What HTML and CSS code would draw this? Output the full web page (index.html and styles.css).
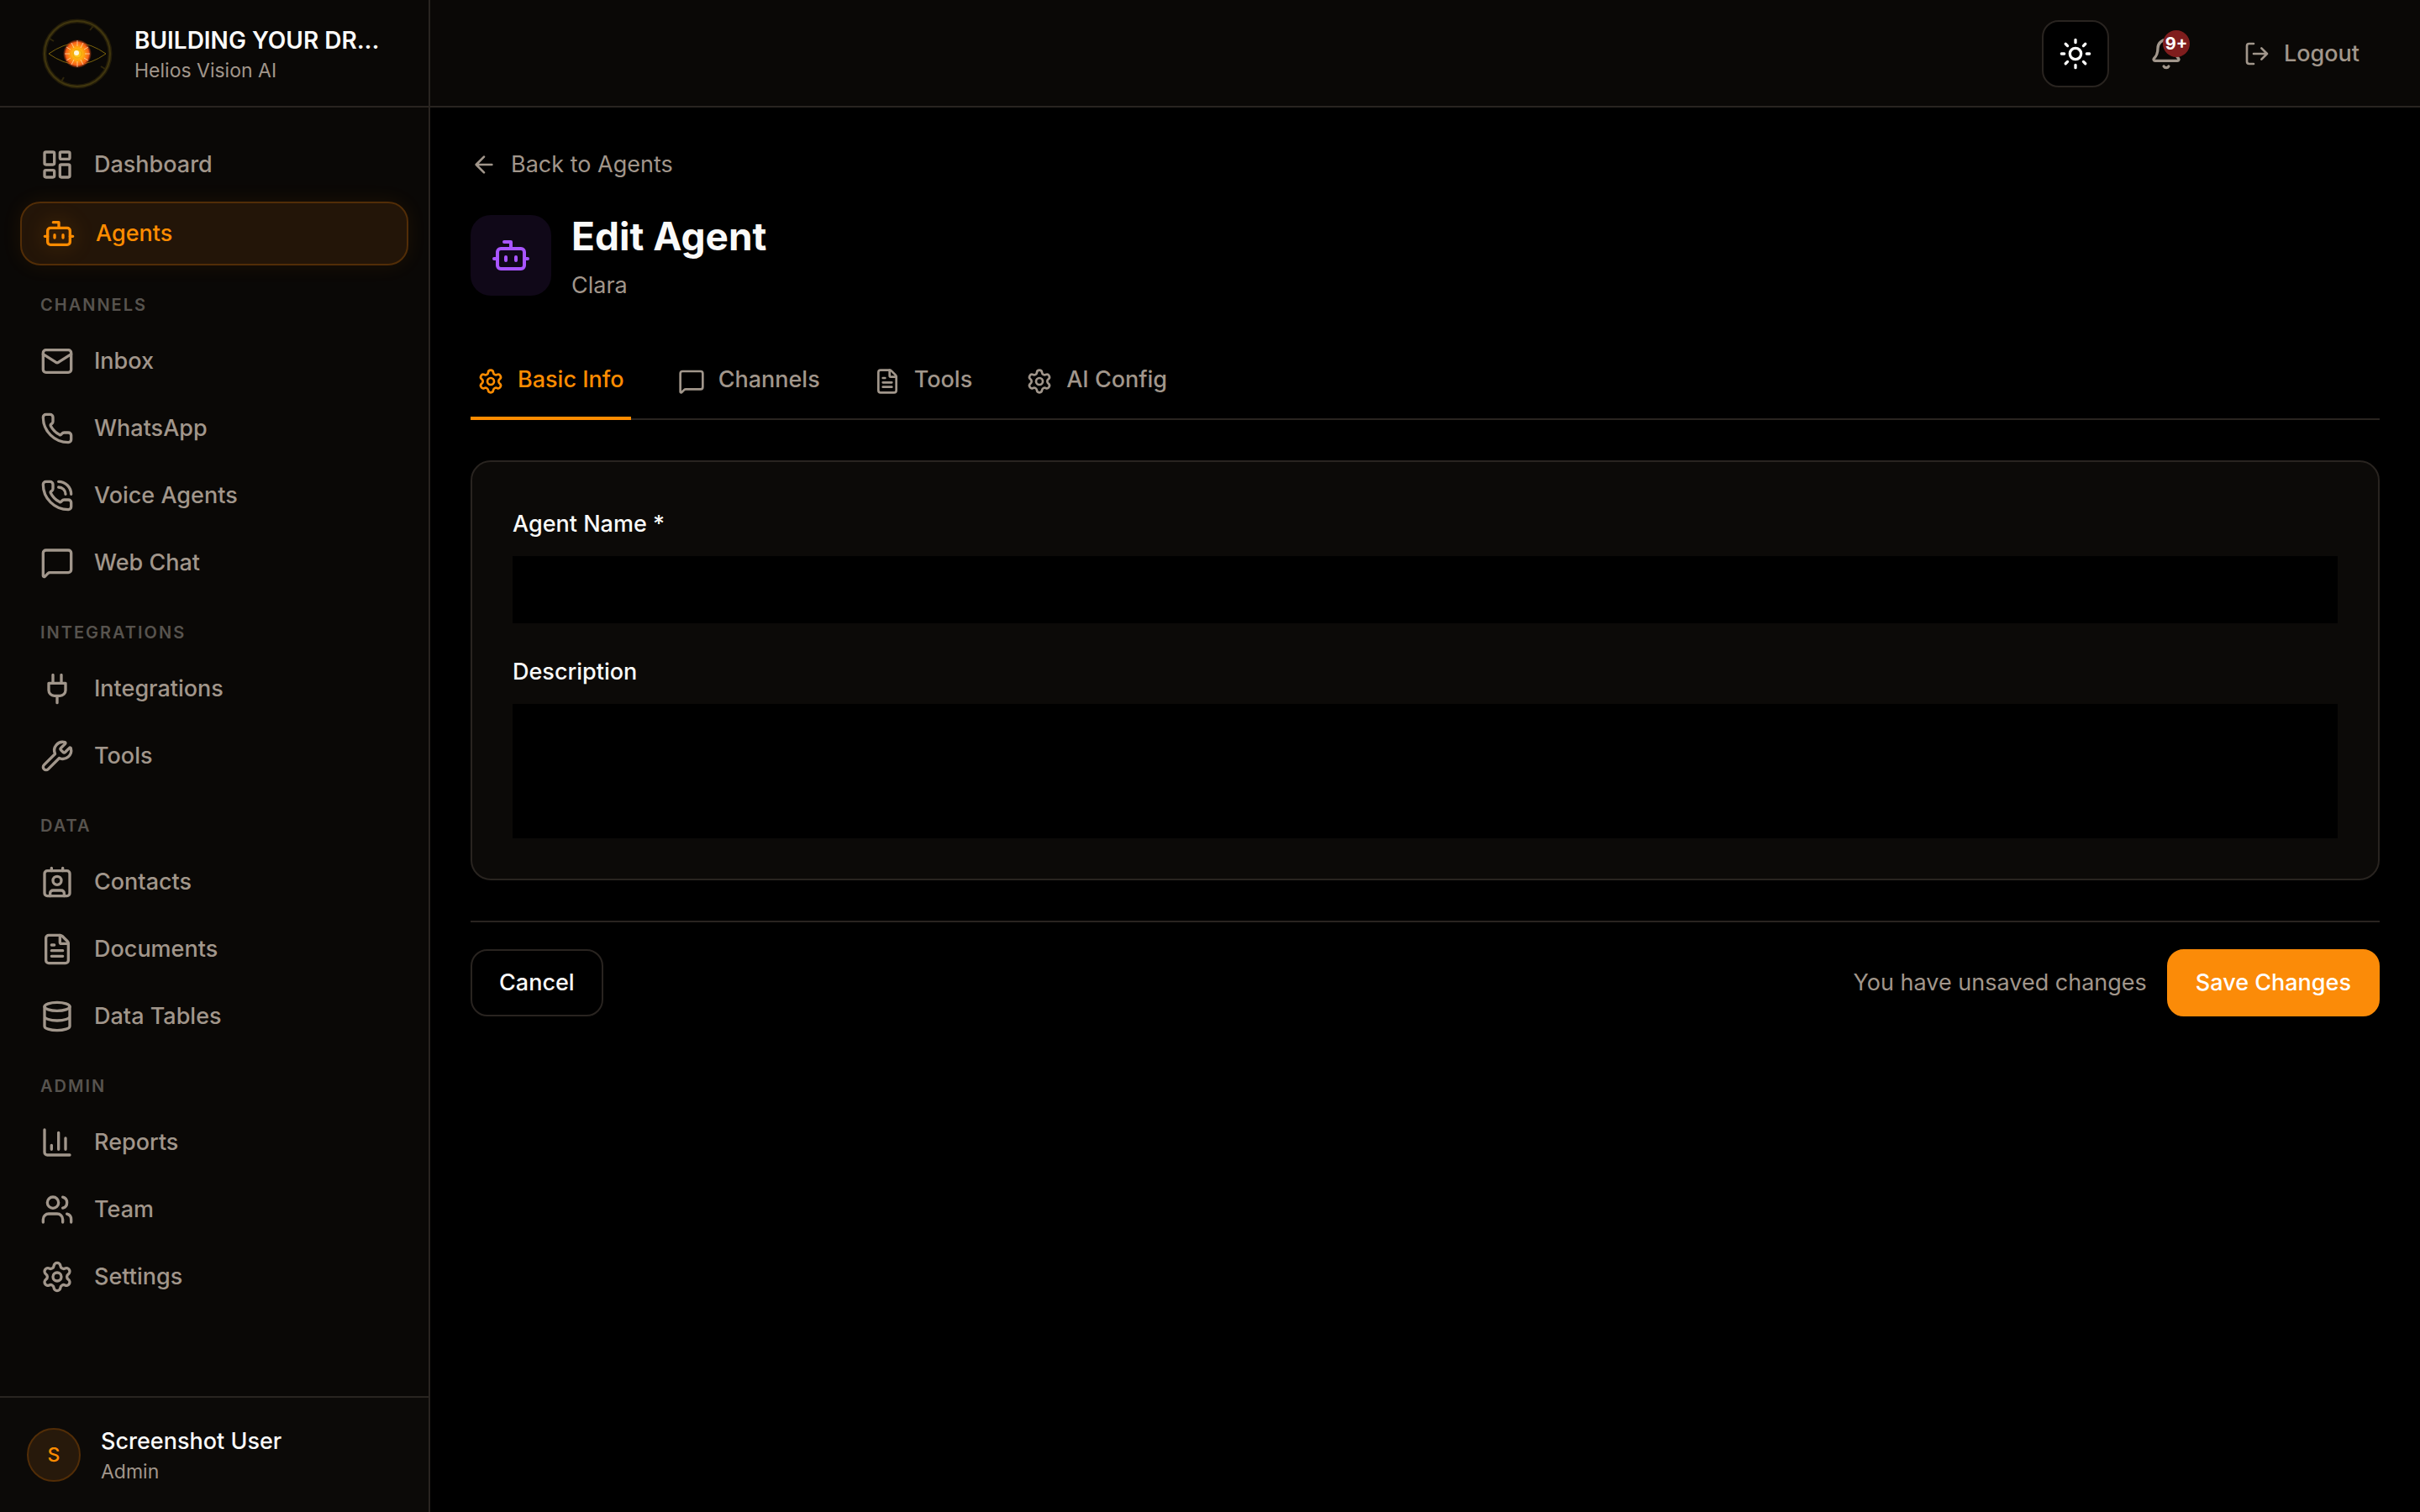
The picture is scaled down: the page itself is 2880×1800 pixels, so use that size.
FILE: index.html
```html
<!DOCTYPE html>
<html lang="en">
<head>
<meta charset="utf-8">
<title>Edit Agent</title>
<link rel="stylesheet" href="styles.css">
</head>
<body>
<svg class="sprite" aria-hidden="true">
  <symbol id="i-dashboard" viewBox="0 0 24 24"><rect width="7" height="9" x="3" y="3" rx="1"/><rect width="7" height="5" x="14" y="3" rx="1"/><rect width="7" height="9" x="14" y="12" rx="1"/><rect width="7" height="5" x="3" y="16" rx="1"/></symbol>
  <symbol id="i-bot" viewBox="0 0 24 24"><path d="M12 8V4H8"/><rect width="16" height="12" x="4" y="8" rx="2"/><path d="M2 14h2M20 14h2M15 13v2M9 13v2"/></symbol>
  <symbol id="i-mail" viewBox="0 0 24 24"><rect width="20" height="16" x="2" y="4" rx="2"/><path d="m22 7-8.991 5.727a2 2 0 0 1-2.009 0L2 7"/></symbol>
  <symbol id="i-phone" viewBox="0 0 24 24"><path d="M13.832 16.568a1 1 0 0 0 1.213-.303l.355-.465A2 2 0 0 1 17 15h3a2 2 0 0 1 2 2v3a2 2 0 0 1-2 2A18 18 0 0 1 2 4a2 2 0 0 1 2-2h3a2 2 0 0 1 2 2v3a2 2 0 0 1-.8 1.6l-.468.351a1 1 0 0 0-.292 1.233 14 14 0 0 0 6.392 6.384"/></symbol>
  <symbol id="i-phone-call" viewBox="0 0 24 24"><path d="M13 2a9 9 0 0 1 9 9M13 6a5 5 0 0 1 5 5"/><path d="M13.832 16.568a1 1 0 0 0 1.213-.303l.355-.465A2 2 0 0 1 17 15h3a2 2 0 0 1 2 2v3a2 2 0 0 1-2 2A18 18 0 0 1 2 4a2 2 0 0 1 2-2h3a2 2 0 0 1 2 2v3a2 2 0 0 1-.8 1.6l-.468.351a1 1 0 0 0-.292 1.233 14 14 0 0 0 6.392 6.384"/></symbol>
  <symbol id="i-chat" viewBox="0 0 24 24"><path d="M22 17a2 2 0 0 1-2 2H6.828a2 2 0 0 0-1.414.586l-2.202 2.202A.71.71 0 0 1 2 21.286V5a2 2 0 0 1 2-2h16a2 2 0 0 1 2 2z"/></symbol>
  <symbol id="i-plug" viewBox="0 0 24 24"><path d="M12 22v-5M9 8V2M15 8V2M18 8v5a4 4 0 0 1-4 4h-4a4 4 0 0 1-4-4V8Z"/></symbol>
  <symbol id="i-wrench" viewBox="0 0 24 24"><path d="M14.7 6.3a1 1 0 0 0 0 1.4l1.6 1.6a1 1 0 0 0 1.4 0l3.106-3.105c.32-.322.863-.22.983.218a6 6 0 0 1-8.259 7.057l-7.91 7.91a1 1 0 0 1-2.999-3l7.91-7.91a6 6 0 0 1 7.057-8.259c.438.12.54.662.219.984z"/></symbol>
  <symbol id="i-contact" viewBox="0 0 24 24"><path d="M16 2v2M8 2v2M7 22v-2a2 2 0 0 1 2-2h6a2 2 0 0 1 2 2v2"/><circle cx="12" cy="11" r="3"/><rect x="3" y="4" width="18" height="18" rx="2"/></symbol>
  <symbol id="i-file" viewBox="0 0 24 24"><path d="M6 22a2 2 0 0 1-2-2V4a2 2 0 0 1 2-2h8a2.4 2.4 0 0 1 1.704.706l3.588 3.588A2.4 2.4 0 0 1 20 8v12a2 2 0 0 1-2 2z"/><path d="M14 2v5a1 1 0 0 0 1 1h5M10 9H8M16 13H8M16 17H8"/></symbol>
  <symbol id="i-database" viewBox="0 0 24 24"><ellipse cx="12" cy="5" rx="9" ry="3"/><path d="M3 5V19A9 3 0 0 0 21 19V5M3 12A9 3 0 0 0 21 12"/></symbol>
  <symbol id="i-chart" viewBox="0 0 24 24"><path d="M3 3v16a2 2 0 0 0 2 2h16M18 17V9M13 17V5M8 17v-3"/></symbol>
  <symbol id="i-users" viewBox="0 0 24 24"><path d="M16 21v-2a4 4 0 0 0-4-4H6a4 4 0 0 0-4 4v2M16 3.128a4 4 0 0 1 0 7.744M22 21v-2a4 4 0 0 0-3-3.87"/><circle cx="9" cy="7" r="4"/></symbol>
  <symbol id="i-gear" viewBox="0 0 24 24"><path d="M9.671 4.136a2.34 2.34 0 0 1 4.659 0 2.34 2.34 0 0 0 3.319 1.915 2.34 2.34 0 0 1 2.33 4.033 2.34 2.34 0 0 0 0 3.831 2.34 2.34 0 0 1-2.33 4.033 2.34 2.34 0 0 0-3.319 1.915 2.34 2.34 0 0 1-4.659 0 2.34 2.34 0 0 0-3.32-1.915 2.34 2.34 0 0 1-2.33-4.033 2.34 2.34 0 0 0 0-3.831A2.34 2.34 0 0 1 6.35 6.051a2.34 2.34 0 0 0 3.319-1.915"/><circle cx="12" cy="12" r="3"/></symbol>
  <symbol id="i-sun" viewBox="0 0 24 24"><circle cx="12" cy="12" r="4"/><path d="M12 2v2M12 20v2M4.93 4.93l1.41 1.41M17.66 17.66l1.41 1.41M2 12h2M20 12h2M6.34 17.66l-1.41 1.41M19.07 4.93l-1.41 1.41"/></symbol>
  <symbol id="i-bell" viewBox="0 0 24 24"><path d="M10.268 21a2 2 0 0 0 3.464 0M3.262 15.326A1 1 0 0 0 4 17h16a1 1 0 0 0 .74-1.673C19.41 13.956 18 12.499 18 8A6 6 0 0 0 6 8c0 4.499-1.411 5.956-2.738 7.326"/></symbol>
  <symbol id="i-logout" viewBox="0 0 24 24"><path d="m16 17 5-5-5-5M21 12H9M9 21H5a2 2 0 0 1-2-2V5a2 2 0 0 1 2-2h4"/></symbol>
  <symbol id="i-back" viewBox="0 0 24 24"><path d="m12 19-7-7 7-7M19 12H5"/></symbol>
</svg>

<div class="app">
  <aside class="sidebar">
    <div class="brand">
      <svg class="brand-logo" viewBox="0 0 88 88" aria-hidden="true">
        <defs>
          <radialGradient id="sun-glow">
            <stop offset="0" stop-color="#ffd21a"/>
            <stop offset=".45" stop-color="#ffa60f"/>
            <stop offset=".8" stop-color="#f8601a"/>
            <stop offset="1" stop-color="#d8400f" stop-opacity="0"/>
          </radialGradient>
        </defs>
        <circle cx="44" cy="44" r="39" fill="none" stroke="#231c09" stroke-width="5"/>
        <circle cx="44" cy="44" r="39" fill="none" stroke="#40360e" stroke-width="2"/>
        <path d="M63 11l-4 5M11 26l5 3M77 62l-5-3M25 77l3-5" stroke="#2e260b" stroke-width="2"/>
        <path d="M10 44Q27 32 44 31Q61 32 78 44Q61 56 44 57Q27 56 10 44Z" fill="none" stroke="#7a620c" stroke-width="1"/>
        <circle cx="44" cy="44" r="17" fill="url(#sun-glow)"/>
        <path d="M44 28v7M44 53v7M29 44h6M53 44h6M37 31l3 6M51 31l-3 6M37 57l3-6M51 57l-3-6M31 36l5 3M57 36l-5 3M31 52l5-3M57 52l-5-3" stroke="#ffe0b0" stroke-opacity=".75" stroke-width="1"/>
        <circle cx="44" cy="44" r="5" fill="#ffc41c" stroke="#e8a60c" stroke-width="1"/>
        <circle cx="43" cy="43" r="3" fill="#fff6d8"/>
      </svg>
      <div class="brand-text">
        <div class="brand-name">BUILDING YOUR DR...</div>
        <div class="small">Helios Vision AI</div>
      </div>
    </div>
    <nav class="nav">
      <div class="nav-group">
        <a class="nav-item" href="#"><svg class="icon"><use href="#i-dashboard"/></svg>Dashboard</a>
        <a class="nav-item active" href="#" aria-current="page"><svg class="icon"><use href="#i-bot"/></svg>Agents</a>
      </div>
      <div class="nav-section">
        <h2 class="nav-label">CHANNELS</h2>
        <div class="nav-group">
          <a class="nav-item" href="#"><svg class="icon"><use href="#i-mail"/></svg>Inbox</a>
          <a class="nav-item" href="#"><svg class="icon"><use href="#i-phone"/></svg>WhatsApp</a>
          <a class="nav-item" href="#"><svg class="icon"><use href="#i-phone-call"/></svg>Voice Agents</a>
          <a class="nav-item" href="#"><svg class="icon"><use href="#i-chat"/></svg>Web Chat</a>
        </div>
      </div>
      <div class="nav-section">
        <h2 class="nav-label">INTEGRATIONS</h2>
        <div class="nav-group">
          <a class="nav-item" href="#"><svg class="icon"><use href="#i-plug"/></svg>Integrations</a>
          <a class="nav-item" href="#"><svg class="icon"><use href="#i-wrench"/></svg>Tools</a>
        </div>
      </div>
      <div class="nav-section">
        <h2 class="nav-label">DATA</h2>
        <div class="nav-group">
          <a class="nav-item" href="#"><svg class="icon"><use href="#i-contact"/></svg>Contacts</a>
          <a class="nav-item" href="#"><svg class="icon"><use href="#i-file"/></svg>Documents</a>
          <a class="nav-item" href="#"><svg class="icon"><use href="#i-database"/></svg>Data Tables</a>
        </div>
      </div>
      <div class="nav-section">
        <h2 class="nav-label">ADMIN</h2>
        <div class="nav-group">
          <a class="nav-item" href="#"><svg class="icon"><use href="#i-chart"/></svg>Reports</a>
          <a class="nav-item" href="#"><svg class="icon"><use href="#i-users"/></svg>Team</a>
          <a class="nav-item" href="#"><svg class="icon"><use href="#i-gear"/></svg>Settings</a>
        </div>
      </div>
    </nav>
    <div class="user">
      <div class="avatar">S</div>
      <div>
        <div class="user-name">Screenshot User</div>
        <div class="small">Admin</div>
      </div>
    </div>
  </aside>

  <div class="content">
    <header class="topbar">
      <button class="theme-button" type="button" aria-label="Toggle theme"><svg class="icon"><use href="#i-sun"/></svg></button>
      <button class="bell-button" type="button" aria-label="Notifications"><svg class="icon"><use href="#i-bell"/></svg><span class="badge">9+</span></button>
      <button class="logout-button" type="button"><svg class="icon icon-sm"><use href="#i-logout"/></svg>Logout</button>
    </header>
    <main class="main">
      <a class="back" href="#"><svg class="icon icon-sm"><use href="#i-back"/></svg>Back to Agents</a>
      <div class="page-head">
        <div class="page-icon"><svg class="icon icon-lg"><use href="#i-bot"/></svg></div>
        <div class="page-titles">
          <h1 class="page-title">Edit Agent</h1>
          <p class="page-subtitle">Clara</p>
        </div>
      </div>
      <div class="tabs" role="tablist">
        <button class="tab selected" type="button" role="tab" aria-selected="true"><svg class="icon icon-sm"><use href="#i-gear"/></svg>Basic Info</button>
        <button class="tab" type="button" role="tab"><svg class="icon icon-sm"><use href="#i-chat"/></svg>Channels</button>
        <button class="tab" type="button" role="tab"><svg class="icon icon-sm"><use href="#i-file"/></svg>Tools</button>
        <button class="tab" type="button" role="tab"><svg class="icon icon-sm"><use href="#i-gear"/></svg>AI Config</button>
      </div>
      <form class="form">
        <div class="card">
          <div class="field">
            <label class="field-label" for="agent-name">Agent Name *</label>
            <input class="control" id="agent-name" type="text">
          </div>
          <div class="field">
            <label class="field-label" for="agent-description">Description</label>
            <textarea class="control control-area" id="agent-description"></textarea>
          </div>
        </div>
        <div class="actions">
          <button class="button" type="button">Cancel</button>
          <div class="actions-end">
            <span class="hint">You have unsaved changes</span>
            <button class="button primary" type="submit">Save Changes</button>
          </div>
        </div>
      </form>
    </main>
  </div>
</div>
</body>
</html>
```
FILE: styles.css
```css
:root {
  --bg: #000;
  --surface: #0a0806;
  --surface-raised: #0c0a08;
  --border: #292420;
  --text: #fafaf9;
  --muted: #a1968b;
  --faint: #57534e;
  --accent: #ff8c00;
}

* { box-sizing: border-box; }

body {
  margin: 0;
  background: var(--bg);
  color: var(--text);
  font-family: Inter, "Liberation Sans", sans-serif;
  font-size: 27px;
  line-height: 40px;
}

h1, h2, p { margin: 0; }
a { color: inherit; text-decoration: none; }

button {
  margin: 0;
  padding: 0;
  border: 0;
  background: none;
  color: inherit;
  font: inherit;
  cursor: pointer;
}

.sprite { display: none; }

.icon {
  flex: none;
  width: 40px;
  height: 40px;
  fill: none;
  stroke: currentColor;
  stroke-width: 2;
  stroke-linecap: round;
  stroke-linejoin: round;
}
.icon-sm { width: 32px; height: 32px; }
.icon-lg { width: 48px; height: 48px; }

.app { display: flex; min-height: 100vh; }

/* Sidebar */
.sidebar {
  flex: none;
  display: flex;
  flex-direction: column;
  width: 512px;
  border-right: 2px solid var(--border);
  background: var(--surface);
}

.brand {
  display: flex;
  align-items: center;
  gap: 24px;
  height: 128px;
  padding: 2px 48px 0;
  border-bottom: 2px solid var(--border);
}
.brand-logo { flex: none; width: 88px; height: 88px; }
.brand-text { min-width: 0; white-space: nowrap; }
.brand-name { font-size: 28px; font-weight: 600; }
.small {
  color: var(--muted);
  font-size: 23px;
  line-height: 32px;
}

.nav {
  flex: 1;
  display: flex;
  flex-direction: column;
  gap: 32px;
  padding: 32px 24px;
}
.nav-group { display: flex; flex-direction: column; gap: 8px; }
.nav-section { display: flex; flex-direction: column; gap: 16px; }
.nav-label {
  padding: 0 24px;
  color: var(--faint);
  font-size: 20px;
  font-weight: 600;
  line-height: 30px;
  letter-spacing: 0.1em;
}
.nav-item {
  display: flex;
  align-items: center;
  gap: 24px;
  padding: 16px 24px;
  border-radius: 24px;
  color: var(--muted);
  font-weight: 500;
}
.nav-item.active {
  border: 2px solid #522d07;
  background: #231508;
  color: var(--accent);
  box-shadow: 0 0 24px rgba(255, 140, 0, 0.08);
}
.nav-item.active .icon { filter: drop-shadow(0 0 12px rgba(255, 140, 0, 0.3)); }

.user {
  display: flex;
  align-items: center;
  gap: 24px;
  padding: 32px;
  border-top: 2px solid var(--border);
  background: var(--surface-raised);
}
.avatar {
  display: flex;
  align-items: center;
  justify-content: center;
  width: 64px;
  height: 64px;
  border: 2px solid #522d07;
  border-radius: 50%;
  background: #27190b;
  color: var(--accent);
  font-size: 23px;
  font-weight: 500;
}
.user-name { font-weight: 500; }

/* Top bar */
.content { flex: 1; min-width: 0; }
.topbar {
  display: flex;
  align-items: center;
  justify-content: flex-end;
  gap: 24px;
  height: 128px;
  padding: 2px 48px 0;
  border-bottom: 2px solid var(--border);
  background: var(--surface);
}
.theme-button {
  display: flex;
  align-items: center;
  justify-content: center;
  width: 80px;
  height: 80px;
  border: 2px solid var(--border);
  border-radius: 20px;
  background: var(--bg);
}
.bell-button {
  position: relative;
  display: flex;
  align-items: center;
  justify-content: center;
  width: 88px;
  height: 88px;
  color: var(--muted);
}
.badge {
  position: absolute;
  top: 16px;
  right: 16px;
  width: 32px;
  height: 32px;
  border-radius: 50%;
  background: #7f1d1d;
  color: #fff;
  font-size: 20px;
  font-weight: 700;
  line-height: 32px;
  text-align: center;
}
.logout-button {
  display: flex;
  align-items: center;
  gap: 16px;
  padding: 16px 24px;
  color: var(--muted);
  font-weight: 500;
}

/* Page */
.main { padding: 48px; }
.back {
  display: inline-flex;
  align-items: center;
  gap: 16px;
  color: var(--muted);
  vertical-align: top;
}
.page-head {
  display: flex;
  align-items: center;
  gap: 24px;
  margin-top: 32px;
}
.page-icon {
  display: flex;
  align-items: center;
  justify-content: center;
  width: 96px;
  height: 96px;
  border-radius: 24px;
  background: #100818;
  color: #a855ff;
}
.page-titles { display: grid; gap: 6px; }
.page-title {
  font-size: 46px;
  font-weight: 700;
  line-height: 66px;
}
.page-subtitle { color: var(--muted); }

.tabs {
  display: flex;
  gap: 48px;
  margin-top: 48px;
  box-shadow: inset 0 -2px var(--border);
}
.tab {
  display: flex;
  align-items: center;
  gap: 16px;
  padding: 24px 8px;
  border-bottom: 4px solid transparent;
  color: var(--muted);
  font-weight: 500;
}
.tab .icon { margin-top: 4px; }
.tab.selected { border-color: var(--accent); color: var(--accent); }

.form { margin-top: 48px; }
.card {
  display: grid;
  gap: 32px;
  padding: 48px;
  border: 2px solid var(--border);
  border-radius: 24px;
  background: var(--surface-raised);
}
.field { display: grid; gap: 12px; }
.field-label { font-weight: 500; line-height: 52px; }
.control {
  width: 100%;
  height: 80px;
  margin: 0;
  padding: 16px 24px;
  border: 0;
  border-radius: 0;
  background: var(--bg);
  color: var(--text);
  font: inherit;
}
.control-area { display: block; height: 160px; resize: none; }

.actions {
  display: flex;
  align-items: center;
  justify-content: space-between;
  margin-top: 48px;
  padding-top: 32px;
  border-top: 2px solid var(--border);
}
.actions-end { display: flex; align-items: center; gap: 24px; }
.hint { color: var(--muted); }
.button {
  padding: 18px 32px;
  border: 2px solid var(--border);
  border-radius: 20px;
  font-weight: 500;
}
.button.primary {
  border-color: #fb8b08;
  background: #fb8b08;
  color: #fff;
}
```
